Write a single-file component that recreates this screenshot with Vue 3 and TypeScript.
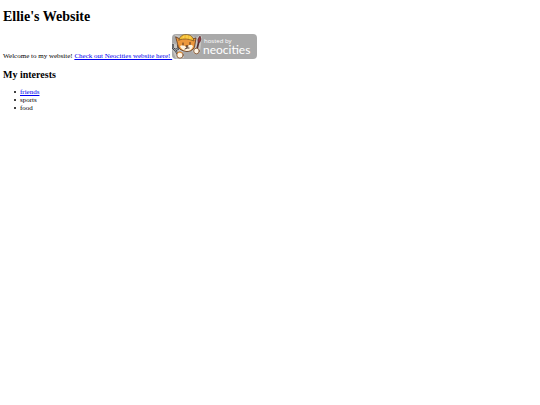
<script setup lang="ts">
interface Interest {
  label: string
  href?: string
}

const interests: Interest[] = [
  { label: 'friends', href: '#friends' },
  { label: 'sports' },
  { label: 'food' },
]
</script>

<template>
  <main class="page">
    <h1>Ellie's Website</h1>
    <p>
      Welcome to my website!
      <a href="#neocities">Check out Neocities website here! <svg class="badge" viewBox="0 0 85 25" role="img" aria-label="hosted by neocities">
        <rect width="85" height="25" rx="4" fill="#a9a9a9" />
        <g stroke-linejoin="round" stroke-linecap="round">
          <path d="M3 0.8 L8 1.8 Q13 -1 19 1 L24 4 L28 1 L30 3 L29 10 L28 19 L22 20 L20 17 L11 18 L12 24 L4 25 L0 15 L1 9 L5 11 Z" fill="#d8d5d1" opacity="0.65" />
          <path d="M1 11 V14 L3 16 L6 15 V12 M3 16 L8 23" fill="none" stroke="#353238" stroke-width="2" />
          <path d="M1 11 V14 L3 16 L6 15 V12 M3 16 L8 23" fill="none" stroke="#aeb8bb" stroke-width="0.8" />
          <path d="M4 3 L8 5 Q14 1 20 5 L24 4 L23 10 Q23 17 15 17.5 Q6 17 5.5 10 Z" fill="#ed983d" stroke="#553019" stroke-width="0.8" />
          <path d="M7 6 Q8 0.5 14 0.5 Q21 0.5 22 7 Q14 3.5 7 6 Z" fill="#f5bd35" stroke="#725020" stroke-width="0.7" />
          <path d="M11 4 L12 2 M15 4 L15 1.5 M18 5 L18 2.5" fill="none" stroke="#ffe16b" stroke-width="0.8" />
          <path d="M8 12 Q11 10 14.5 13 Q18 9 21 12 Q20 17 14.5 17 Q9 16 8 12 Z" fill="#fff3df" />
          <path d="M11 9 V11 M18 8.5 V10.5 M14 12 H16 M15 12 V14 L13 15 M15 14 L17 14" fill="none" stroke="#3d241c" stroke-width="0.9" />
          <circle cx="8" cy="21" r="3.2" fill="#fff5e5" stroke="#79451f" stroke-width="0.8" />
          <path d="M5.5 19 Q7 17 10 19" fill="none" stroke="#ed983d" stroke-width="1" />
          <path d="M25 15 L27 7" stroke="#583030" stroke-width="1.7" />
          <path d="M26 8 Q25 5 28 2 Q30 5 28 8 Z" fill="#963b40" stroke="#55262c" stroke-width="0.6" />
          <circle cx="24.5" cy="17" r="2.8" fill="#fff5e5" stroke="#79451f" stroke-width="0.8" />
        </g>
        <text class="hosted" x="32" y="9">hosted by</text>
        <text class="brand" x="31" y="20">neocities</text>
      </svg></a>
    </p>
    <h2>My interests</h2>
    <ul>
      <li v-for="interest in interests" :key="interest.label">
        <a v-if="interest.href" :href="interest.href">{{ interest.label }}</a>
        <template v-else>{{ interest.label }}</template>
      </li>
    </ul>
  </main>
</template>

<style>
body {
  background: #fff;
}
</style>

<style scoped>
.page {
  padding: 9px 3px;
  color: #000;
  font-family: "Liberation Serif", "Times New Roman", serif;
  font-size: 7px;
  line-height: 8px;
}

h1 {
  margin: 0 0 9px;
  font-size: 14px;
  line-height: 16px;
}

h2 {
  margin: 9px 0 7px;
  font-size: 10px;
  line-height: 12px;
}

p {
  margin: 0;
}

a {
  color: #0000ee;
  text-decoration: underline;
}

.badge {
  width: 85px;
  height: 25px;
  vertical-align: -1px;
}

.hosted,
.brand {
  fill: #fff;
}

.hosted {
  font-family: "Open Sans", sans-serif;
  font-size: 6px;
}

.brand {
  font-family: Lato, sans-serif;
  font-size: 12px;
}

ul {
  margin: 0;
  padding-left: 11px;
  list-style: none;
}

li {
  display: flex;
  align-items: center;
  gap: 4px;
}

li::before {
  width: 2px;
  height: 2px;
  border-radius: 50%;
  background: currentColor;
  content: "";
}
</style>
